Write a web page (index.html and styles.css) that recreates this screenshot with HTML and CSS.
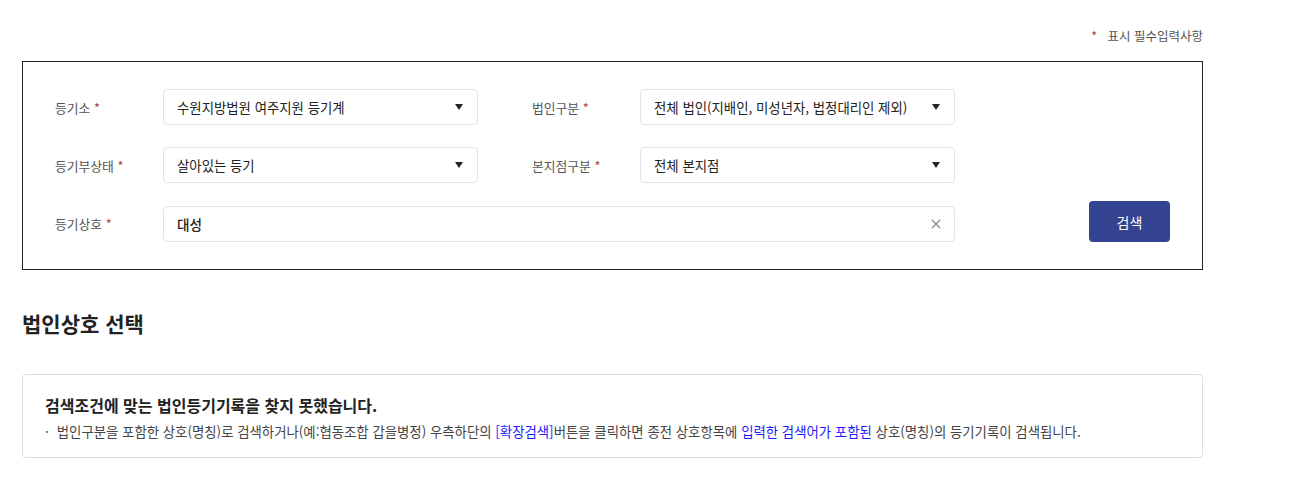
FILE: index.html
```html
<!DOCTYPE html>
<html lang="ko">
<head>
    <meta charset="UTF-8">
    <meta name="viewport" content="width=device-width, initial-scale=1.0">
    <title>법인상호 검색</title>
    <link rel="stylesheet" href="styles.css">
</head>
<body>
    <div class="page">
        <!-- 필수 안내 -->
        <p class="req-note"><span class="star">*</span> 표시 필수입력사항</p>

        <!-- 검색 조건 -->
        <form class="search-box">
            <div class="row">
                <label class="lbl">등기소 <span class="star">*</span></label>
                <div class="sel">
                    <span>수원지방법원 여주지원 등기계</span>
                    <i class="arrow"></i>
                </div>
                <label class="lbl lbl-2">법인구분 <span class="star">*</span></label>
                <div class="sel">
                    <span>전체 법인(지배인, 미성년자, 법정대리인 제외)</span>
                    <i class="arrow"></i>
                </div>
            </div>
            <div class="row">
                <label class="lbl">등기부상태 <span class="star">*</span></label>
                <div class="sel">
                    <span>살아있는 등기</span>
                    <i class="arrow"></i>
                </div>
                <label class="lbl lbl-2">본지점구분 <span class="star">*</span></label>
                <div class="sel">
                    <span>전체 본지점</span>
                    <i class="arrow"></i>
                </div>
            </div>
            <div class="row row-last">
                <label class="lbl">등기상호 <span class="star">*</span></label>
                <div class="text-input">
                    <span>대성</span>
                    <svg class="clear" width="10" height="10" viewBox="0 0 10 10">
                        <path d="M1 1 L9 9 M9 1 L1 9" stroke="#888" stroke-width="1.3" fill="none"/>
                    </svg>
                </div>
                <button type="button" class="btn-search">검색</button>
            </div>
        </form>

        <h2 class="sec-title">법인상호 선택</h2>

        <!-- 결과 없음 -->
        <div class="result-box">
            <p class="result-title">검색조건에 맞는 법인등기기록을 찾지 못했습니다.</p>
            <p class="result-desc"><span class="dot">·</span>법인구분을 포함한 상호(명칭)로 검색하거나(예:협동조합 갑을병정) 우측하단의 <span class="blue">[확장검색]</span>버튼을 클릭하면 종전 상호항목에 <span class="blue">입력한 검색어가 포함된</span> 상호(명칭)의 등기기록이 검색됩니다.</p>
        </div>
    </div>
</body>
</html>
```

FILE: styles.css
```css
body {
    margin: 0;
    font-family: "Noto Sans CJK KR", "Noto Sans", sans-serif;
    color: #222;
    background: #fff;
}
.page {
    width: 1181px;
    margin-left: 22px;
    padding-top: 27px;
}
.req-note {
    margin: 0;
    text-align: right;
    font-size: 12.5px;
    line-height: 18px;
    color: #555;
}
.req-note .star {
    margin-right: 7px;
}
.star {
    color: #b0392d;
}

/* 검색 박스 */
.search-box {
    margin-top: 16px;
    border: 1px solid #222;
    padding: 27px 32px 27px 32px;
}
.row {
    display: flex;
    align-items: center;
    height: 36px;
}
.row + .row {
    margin-top: 22px;
}
.row-last {
    height: 41px;
    align-items: flex-end;
    margin-top: 18px !important;
}
.row-last .lbl {
    height: 36px;
    line-height: 36px;
}
.lbl {
    width: 108px;
    flex: none;
    font-size: 12.8px;
    color: #555;
}
.lbl-2 {
    margin-left: 54px;
}
.sel {
    width: 315px;
    height: 36px;
    box-sizing: border-box;
    border: 1px solid #e3e3e3;
    border-radius: 4px;
    display: flex;
    align-items: center;
    justify-content: space-between;
    padding: 0 14px 0 13px;
    font-size: 13.4px;
    color: #222;
}
.arrow {
    width: 0;
    height: 0;
    border-left: 4px solid transparent;
    border-right: 4px solid transparent;
    border-top: 6px solid #222;
}
.text-input {
    width: 792px;
    height: 36px;
    box-sizing: border-box;
    border: 1px solid #e3e3e3;
    border-radius: 4px;
    display: flex;
    align-items: center;
    justify-content: space-between;
    padding: 0 13px 0 13px;
    font-size: 13.6px;
    font-weight: 500;
}
.btn-search {
    margin-left: auto;
    width: 81px;
    height: 41px;
    border: none;
    border-radius: 4px;
    background-color: #354491;
    color: #fff;
    font-family: inherit;
    font-size: 14px;
    cursor: pointer;
}

/* 결과 */
.sec-title {
    margin: 39px 0 0 0;
    font-size: 21px;
    line-height: 28px;
    font-weight: 700;
}
.result-box {
    margin-top: 37px;
    border: 1px solid #ddd;
    border-radius: 4px;
    padding: 19px 22px 16px 22px;
}
.result-title {
    margin: 0;
    font-size: 16px;
    line-height: 22px;
    font-weight: 700;
    color: #222;
}
.result-desc {
    margin: 5px 0 0 0;
    font-size: 13.4px;
    line-height: 20px;
    color: #444;
}
.dot {
    margin-right: 8px;
}
.blue {
    color: #1a1aff;
}
```
